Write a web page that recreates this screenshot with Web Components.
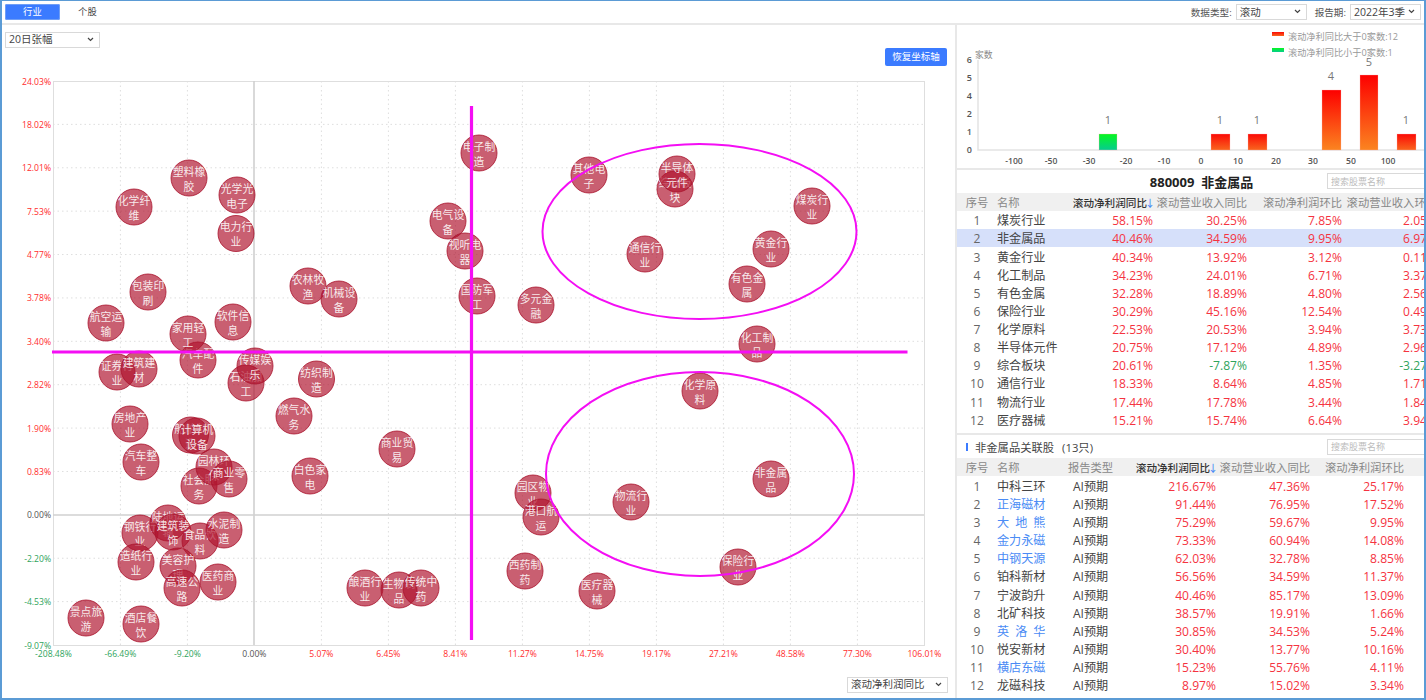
<!DOCTYPE html>
<html lang="zh">
<head>
<meta charset="utf-8">
<title>行业</title>
<style>
html,body{margin:0;padding:0;background:#fff}
body{font-family:"Open Sans","Noto Sans CJK SC",sans-serif;color:#444}
</style>
</head>
<body>
<x-app></x-app>
<script>
const FONT='"Open Sans","Noto Sans CJK SC",sans-serif';
const RED='#f5333f',GREEN='#2fa45c';

class XSelect extends HTMLElement{
  constructor(){super();this.attachShadow({mode:'open'}).innerHTML=`<style>
  :host{display:flex;box-sizing:border-box;align-items:center;justify-content:space-between;height:16px;border:1px solid #d9d9d9;background:#fff;padding:0 5px 0 3px;font-size:10.5px;color:#444;line-height:1;white-space:nowrap}
  svg{flex:none;display:block}
  </style><slot></slot><svg width="7" height="5" viewBox="0 0 7 5"><path d="M1 1l2.5 2.5L6 1" fill="none" stroke="#444" stroke-width="1.2"/></svg>`;}
}
class XTab extends HTMLElement{
  constructor(){super();this.attachShadow({mode:'open'}).innerHTML=`<style>
  :host{display:flex;align-items:center;justify-content:center;box-sizing:border-box;width:55px;height:16px;font-size:9.4px;color:#444;border-radius:2px;line-height:1}
  :host([active]){background:#3b7bff;color:#fff;box-shadow:0 0 0 1px #6f9ef5 inset}
  </style><slot></slot>`;}
}
class XBlueButton extends HTMLElement{
  constructor(){super();this.attachShadow({mode:'open'}).innerHTML=`<style>
  :host{display:flex;align-items:center;justify-content:center;width:62px;height:18px;background:#3b7bff;color:#fff;font-size:9.5px;border-radius:2px;line-height:1}
  </style><slot></slot>`;}
}
class XSearch extends HTMLElement{
  constructor(){super();this.attachShadow({mode:'open'}).innerHTML=`<style>
  :host{display:flex;align-items:center;box-sizing:border-box;width:107px;height:16px;border:1px solid #d9d9d9;padding:0 3px;color:#bbb;font-size:9px;line-height:1;background:#fff;flex:none}
  </style><slot></slot>`;}
}
class XScatter extends HTMLElement{
  constructor(){super();
    const X0=53.4,DX=67,Y0=81,DY=43.385;
    const xl=['-208.48%','-66.49%','-9.20%','0.00%','5.07%','6.45%','8.41%','11.27%','14.75%','19.17%','27.21%','48.58%','77.30%','106.01%'];
    const yl=['24.03%','18.02%','12.01%','7.53%','4.77%','3.78%','3.40%','2.82%','1.90%','0.83%','0.00%','-2.20%','-4.53%','-9.07%'];
    const col=t=>t.startsWith('-')?GREEN:(t==='0.00%'?'#555':'#ff2d2d');
    let g='',lab='';
    xl.forEach((t,i)=>{const x=X0+DX*i;
      if(i>0&&i<13&&i!==3)g+=`<line x1="${x}" x2="${x}" y1="${Y0}" y2="645" stroke="#dedede" stroke-dasharray="1.5 3"/>`;
      lab+=`<text x="${x}" y="657" text-anchor="middle" fill="${col(t)}">${t}</text>`;});
    yl.forEach((t,i)=>{const y=Y0+DY*i;
      if(i>0&&i<13&&i!==10)g+=`<line x1="53" x2="924" y1="${y}" y2="${y}" stroke="#dedede" stroke-dasharray="1.5 3"/>`;
      lab+=`<text x="51" y="${y+3.5}" text-anchor="end" fill="${col(t)}">${t}</text>`;});
    const B=[['化学纤维',134,207],['塑料橡胶',189,178],['光学光电子',237,195],['电力行业',236,233.5],['电气设备',448,221],['电子制造',479,153],['视听电器',465,251],['国防军工',477,296],['多元金融',536,305],['其他电子',589,175],['农林牧渔',308,286],['机械设备',339,299],['包装印刷',148,292],['航空运输',106,323],['软件信息',233,322],['汽车配件',198,360],['家用轻工',188,334],['石油加工',246,383],['传媒娱乐',255,366],['证券行业',117,372],['建筑建材',139,369],['纺织制造',316.5,379],['房地产业',130,424],['燃气水务',294,416],['船舶制造',190.5,435],['计算机设备',197,436],['汽车整车',141,462],['社会服务',199,486],['园林环保',214,467],['商业零售',229,479],['白色家电',310,476],['商业贸易',397,449],['园区物业',533,493],['港口航运',541,517],['物流行业',631,502],['西药制药',525,571],['医疗器械',597,591],['酿酒行业',365,588],['生物制品',399,590],['传统中药',421,588],['钢铁行业',140,533],['陆地运输',168,523],['建筑装饰',173,532],['食品饮料',200,541],['水泥制造',224,530],['造纸行业',136,562],['美容护理',178,566],['高速公路',182,588],['医药商业',218,582],['景点旅游',86,618],['酒店餐饮',141,624],['综合板块',675,189],['半导体元件',677,174],['煤炭行业',812,206],['通信行业',645,254],['黄金行业',771,249],['有色金属',747,284],['化工制品',757,344],['化学原料',700,391],['非金属品',771,479],['保险行业',738,567]];
    const bubbles=B.map(([n,x,y])=>`<g><circle cx="${x}" cy="${y}" r="18" fill="rgba(175,19,45,.68)" stroke="rgba(170,20,45,.8)"/><text text-anchor="middle" fill="rgba(255,255,255,.88)"><tspan x="${x}" y="${y-2.5}">${n.slice(0,3)}</tspan><tspan x="${x}" y="${y+12.5}">${n.slice(3)}</tspan></text></g>`).join('');
    this.attachShadow({mode:'open'}).innerHTML=`<style>
    :host{display:block;height:608px;flex:none}
    svg{display:block;width:955px;height:608px}
    text{font-family:${FONT};font-size:8.6px}
    g text{font-size:10.8px}
    </style><svg viewBox="2 67 955 608">
    <rect x="53.5" y="81.5" width="871" height="564" fill="#fff" stroke="#dedede"/>
    ${g}
    <line x1="254" x2="254" y1="81" y2="645" stroke="#d0d0d0" stroke-width="1.6"/>
    <line x1="53" x2="924" y1="515" y2="515" stroke="#d0d0d0" stroke-width="1.6"/>
    ${lab}${bubbles}
    <line x1="52" x2="907.5" y1="352" y2="352" stroke="#f40ef4" stroke-width="3.2"/>
    <line x1="471.5" x2="471.5" y1="106" y2="640" stroke="#f40ef4" stroke-width="3.2"/>
    <ellipse cx="699.5" cy="231.5" rx="157" ry="87.5" fill="none" stroke="#f40ef4" stroke-width="2"/>
    <ellipse cx="700" cy="474" rx="154" ry="102" fill="none" stroke="#f40ef4" stroke-width="2"/>
    </svg>`;}
}
class XHistogram extends HTMLElement{
  constructor(){super();
    const xs=[[1014,'-100'],[1051,'-50'],[1089,'-30'],[1126,'-20'],[1164,'-10'],[1201,'0'],[1238,'10'],[1276,'20'],[1313,'30'],[1351,'50'],[1388,'100']];
    const ys=[[60,'6'],[78,'5'],[96,'4'],[114,'2'],[132,'1'],[150,'0']];
    const bars=[[1099,18,134,'g','1',1108,124],[1211,19,134,'r1','1',1220,124],[1248,19,134,'r1','1',1257,124],[1322,19,90,'r2','4',1331,80],[1360,18,75,'r2','5',1369,66],[1397,19,134,'r1','1',1406,124]];
    this.attachShadow({mode:'open'}).innerHTML=`<style>
    :host{display:block;height:143px;flex:none;overflow:hidden}
    svg{display:block;width:469px;height:143px}
    text{font-family:${FONT}}
    </style><svg viewBox="957 25 469 143">
    <defs>
    <linearGradient id="g" x1="0" y1="0" x2="0" y2="1"><stop offset="0" stop-color="#06f71f"/><stop offset="1" stop-color="#06cc8f"/></linearGradient>
    <linearGradient id="r1" x1="0" y1="0" x2="0" y2="1"><stop offset="0" stop-color="#fb0a06"/><stop offset="1" stop-color="#f9651e"/></linearGradient>
    <linearGradient id="r2" x1="0" y1="0" x2="0" y2="1"><stop offset="0" stop-color="#fd0000"/><stop offset="1" stop-color="#fb8420"/></linearGradient>
    </defs>
    <path d="M978 60V150H1426" fill="none" stroke="#e3e3e3" stroke-width="1.5"/>
    <rect x="1272" y="32" width="12" height="4" fill="url(#r1)"/>
    <rect x="1272" y="48" width="12" height="4" fill="url(#g)"/>
    <text x="1288" y="39.5" font-size="9.2" fill="#999">滚动净利同比大于0家数:12</text>
    <text x="1288" y="55.5" font-size="9.2" fill="#999">滚动净利同比小于0家数:1</text>
    <text x="975" y="58" font-size="8.8" fill="#888">家数</text>
    ${ys.map(([y,t])=>`<text x="972" y="${y+3}" text-anchor="end" font-size="9" font-weight="600" fill="#555">${t}</text>`).join('')}
    ${xs.map(([x,t])=>`<text x="${x}" y="164" text-anchor="middle" font-size="8.6" font-weight="600" fill="#555">${t}</text>`).join('')}
    ${bars.map(([x,w,y,f,t,tx,ty])=>`<rect x="${x}" y="${y}" width="${w}" height="${150-y}" fill="url(#${f})" stroke="rgba(255,180,180,.5)" stroke-width=".6"/><text x="${tx}" y="${ty}" text-anchor="middle" font-size="11" fill="#777">${t}</text>`).join('')}
    </svg>`;}
}
const T1={cols:'40px 68px 88px 94px 95px 95px',
  head:[['序号','c'],['名称','l'],['滚动净利润同比','s'],['滚动营业收入同比','r'],['滚动净利润环比','r'],['滚动营业收入环比','r']],
  sel:1,
  rows:`煤炭行业 58.15 30.25 7.85 2.05
非金属品 40.46 34.59 9.95 6.97
黄金行业 40.34 13.92 3.12 0.11
化工制品 34.23 24.01 6.71 3.37
有色金属 32.28 18.89 4.80 2.56
保险行业 30.29 45.16 12.54 0.49
化学原料 22.53 20.53 3.94 3.73
半导体元件 20.75 17.12 4.89 2.96
综合板块 20.61 -7.87 1.35 -3.27
通信行业 18.33 8.64 4.85 1.71
物流行业 17.44 17.78 3.44 1.84
医疗器械 15.21 15.74 6.64 3.94`};
const T2={cols:'40px 59px 69px 91px 94px 94px',
  head:[['序号','c'],['名称','l'],['报告类型','c'],['滚动净利润同比','s'],['滚动营业收入同比','r'],['滚动净利润环比','r']],
  sel:-1,ai:true,
  rows:`中科三环 216.67 47.36 25.17
*正海磁材 91.44 76.95 17.52
*大_地_熊 75.29 59.67 9.95
*金力永磁 73.33 60.94 14.08
*中钢天源 62.03 32.78 8.85
铂科新材 56.56 34.59 11.37
宁波韵升 40.46 85.17 13.09
北矿科技 38.57 19.91 1.66
*英_洛_华 30.85 34.53 5.24
悦安新材 30.40 13.77 10.16
*横店东磁 15.23 55.76 4.11
龙磁科技 8.97 15.02 3.34`};
class XTable extends HTMLElement{
  constructor(){super();this.attachShadow({mode:'open'});}
  connectedCallback(){
    const d=this.getAttribute('kind')==='stock'?T2:T1;
    const h=d.head.map(([t,a])=>a==='s'?`<div class="r sort"><span>${t}</span><i>↓</i></div>`:`<div class="${a}">${t}</div>`).join('');
    const rows=d.rows.split('\n').map((l,i)=>{
      const p=l.split(' ');let n=p[0];const blue=n[0]==='*';n=n.replace('*','').replace(/_/g,'\u2002');
      const nums=p.slice(1).map(v=>`<div class="r ${v[0]==='-'?'g':'p'}">${v}%</div>`).join('');
      return `<div class="row${i===d.sel?' sel':''}"><div class="c idx">${i+1}</div><div class="l${blue?' b':''}">${n}</div>${d.ai?'<div class="c">AI预期</div>':''}${nums}</div>`;}).join('');
    this.shadowRoot.innerHTML=`<style>
    :host{display:block;overflow:hidden;flex:none}
    .head,.row{display:grid;grid-template-columns:${d.cols};align-items:center;box-sizing:border-box}
    .head{height:18px;background:#f0f0f0;font-size:11.3px;color:#888;line-height:14px;padding-top:2px}
    .row{height:18.13px;font-size:12.1px;color:#444;line-height:14px;padding-top:3.5px}
    .sel{background:#d6e0fa}
    .c{text-align:center}.l{text-align:left}.r{text-align:right;white-space:nowrap}
    .idx{color:#666}
    .head>div{white-space:nowrap}
    .sort{color:#333;font-weight:500;font-size:10.6px;display:flex;justify-content:flex-end;align-items:center}
    .sort i{font-style:normal;color:#4a8bf5;display:block;width:5px;overflow:visible;text-indent:-2px;margin-right:1px;font-size:10px}
    .b{color:#4a8bf5}.p{color:${RED}}.g{color:${GREEN}}
    </style><div class="head">${h}</div>${rows}`;
  }
}
class XApp extends HTMLElement{
  constructor(){super();this.attachShadow({mode:'open'}).innerHTML=`<style>
  :host{display:flex;flex-direction:column;box-sizing:border-box;width:1426px;height:700px;border:2px solid #5b9bd5;border-top-width:1.5px;overflow:hidden;font-family:${FONT};color:#444;background:#fff}
  .top{display:flex;align-items:center;flex:none;height:21.5px;padding:0 3px;border-bottom:2px solid #e8e8e8;font-size:9.6px;color:#555}
  .spacer{flex:1}
  .lab{margin:0 4px 0 8px;white-space:nowrap}
  .main{flex:1;display:flex;min-height:0}
  .left{width:955px;flex:none;display:flex;flex-direction:column;box-sizing:border-box;border-right:2px solid #e8e8e8;overflow:hidden}
  .bar1{padding:7px 0 0 3px;height:16px;flex:none}
  .bar2{display:flex;justify-content:flex-end;padding-right:8px;flex:none;height:19px}
  .bar3{display:flex;justify-content:flex-end;padding-right:7px;margin-top:2px;flex:none}
  .right{flex:1;min-width:0;display:flex;flex-direction:column;overflow:hidden}
  .sep{height:2px;background:#e8e8e8;flex:none}
  .title{flex:none;height:23px;position:relative;display:flex;align-items:center;justify-content:flex-end}
  .t1{position:absolute;left:0;right:0;text-align:center;font-weight:700;font-size:13px;color:#222;white-space:pre;padding-left:22px;box-sizing:border-box}
  .t2{flex:1;display:flex;align-items:center;font-size:11.3px;color:#444;padding-left:9px;white-space:pre}
  .t2 i{display:block;width:2px;height:8px;background:#3b7bff;margin-right:7px}
  .t2 span{margin-left:8px}
  x-search{position:relative;margin-right:-10px}
  .gap{height:5px;flex:none}
  </style>
  <div class="top">
    <x-tab active>行业</x-tab><x-tab>个股</x-tab>
    <div class="spacer"></div>
    <span class="lab">数据类型:</span><x-select style="width:71px">滚动</x-select>
    <span class="lab">报告期:</span><x-select style="width:71px">2022年3季</x-select>
  </div>
  <div class="main">
    <div class="left">
      <div class="bar1"><x-select style="width:95px">20日张幅</x-select></div>
      <div class="bar2"><x-blue-button>恢复坐标轴</x-blue-button></div>
      <x-scatter></x-scatter>
      <div class="bar3"><x-select style="width:101px">滚动净利润同比</x-select></div>
    </div>
    <div class="right">
      <x-histogram></x-histogram>
      <div class="sep"></div>
      <div class="title"><div class="t1">880009  非金属品</div><x-search>搜索股票名称</x-search></div>
      <x-table kind="ind"></x-table>
      <div class="gap"></div>
      <div class="sep"></div>
      <div class="title"><div class="t2"><i></i>非金属品关联股<span>(13只)</span></div><x-search>搜索股票名称</x-search></div>
      <x-table kind="stock"></x-table>
    </div>
  </div>`;}
}
customElements.define('x-select',XSelect);
customElements.define('x-tab',XTab);
customElements.define('x-blue-button',XBlueButton);
customElements.define('x-search',XSearch);
customElements.define('x-scatter',XScatter);
customElements.define('x-histogram',XHistogram);
customElements.define('x-table',XTable);
customElements.define('x-app',XApp);
</script>
</body>
</html>
